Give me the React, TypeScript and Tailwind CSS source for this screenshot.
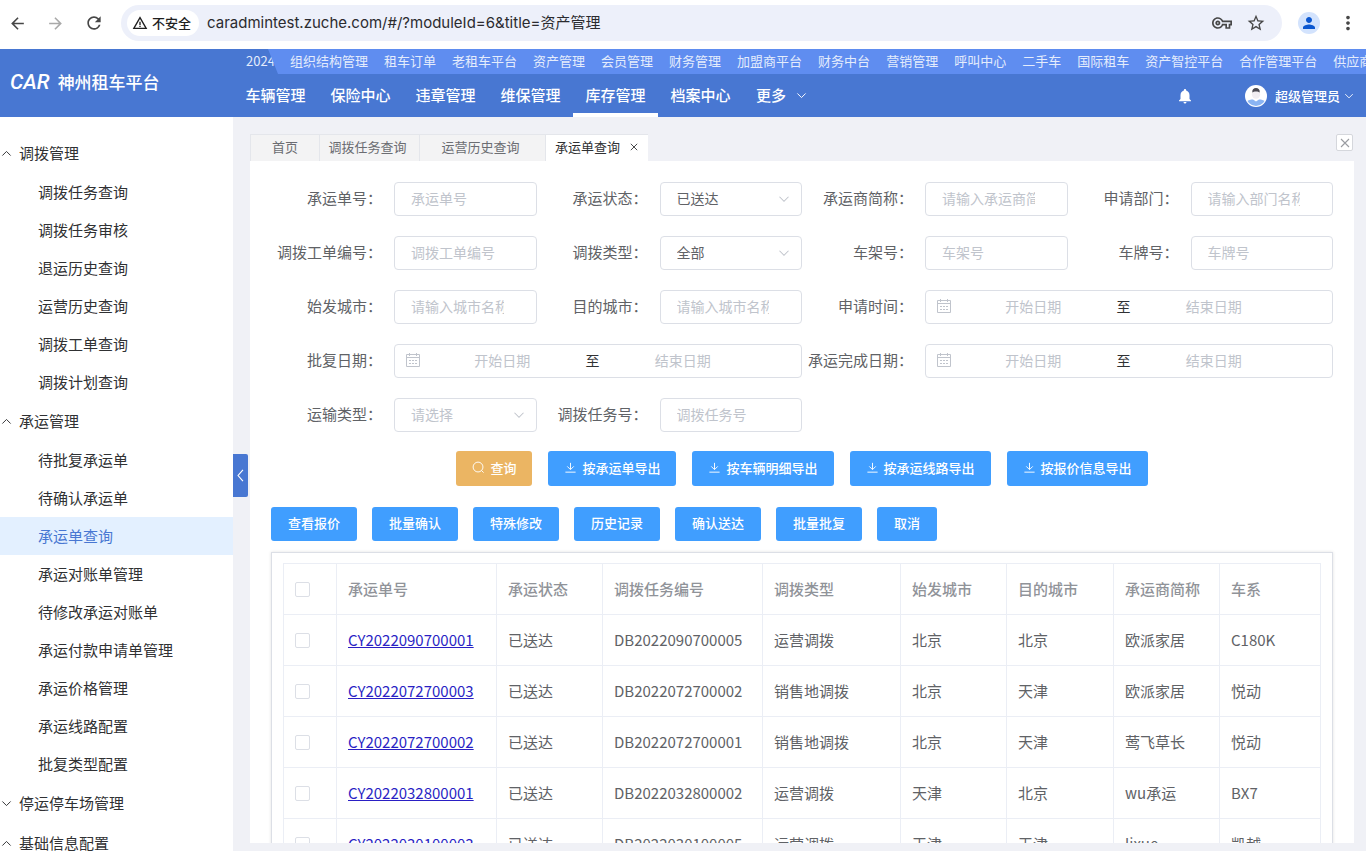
import type { ReactNode } from 'react';
import {
  MdArrowBack,
  MdArrowForward,
  MdMoreVert,
  MdNotifications,
  MdOutlineVpnKey,
  MdPerson,
  MdRefresh,
  MdStarOutline,
  MdWarningAmber,
} from 'react-icons/md';

const SYSTEMS = [
  '组织结构管理', '租车订单', '老租车平台', '资产管理', '会员管理', '财务管理', '加盟商平台', '财务中台',
  '营销管理', '呼叫中心', '二手车', '国际租车', '资产智控平台', '合作管理平台', '供应商平台',
];

const MODULES = ['车辆管理', '保险中心', '违章管理', '维保管理', '库存管理', '档案中心'];

const MENU = [
  {
    title: '调拨管理',
    open: true,
    items: ['调拨任务查询', '调拨任务审核', '退运历史查询', '运营历史查询', '调拨工单查询', '调拨计划查询'],
  },
  {
    title: '承运管理',
    open: true,
    items: [
      '待批复承运单', '待确认承运单', '承运单查询', '承运对账单管理', '待修改承运对账单',
      '承运付款申请单管理', '承运价格管理', '承运线路配置', '批复类型配置',
    ],
  },
  { title: '停运停车场管理', open: false, items: [] },
  { title: '基础信息配置', open: true, items: [] },
];

const EXPORTS = ['按承运单导出', '按车辆明细导出', '按承运线路导出', '按报价信息导出'];
const ACTIONS = ['查看报价', '批量确认', '特殊修改', '历史记录', '确认送达', '批量批复', '取消'];

const COLUMNS = [
  { label: '承运单号', width: 'w-[160px]' },
  { label: '承运状态', width: 'w-[106px]' },
  { label: '调拨任务编号', width: 'w-[160px]' },
  { label: '调拨类型', width: 'w-[138px]' },
  { label: '始发城市', width: 'w-[106px]' },
  { label: '目的城市', width: 'w-[107px]' },
  { label: '承运商简称', width: 'w-[106px]' },
  { label: '车系', width: '' },
];

const ROWS = [
  ['CY2022090700001', '已送达', 'DB2022090700005', '运营调拨', '北京', '北京', '欧派家居', 'C180K'],
  ['CY2022072700003', '已送达', 'DB2022072700002', '销售地调拨', '北京', '天津', '欧派家居', '悦动'],
  ['CY2022072700002', '已送达', 'DB2022072700001', '销售地调拨', '北京', '天津', '莺飞草长', '悦动'],
  ['CY2022032800001', '已送达', 'DB2022032800002', '运营调拨', '天津', '北京', 'wu承运', 'BX7'],
  ['CY2022030100003', '已送达', 'DB2022030100005', '运营调拨', '天津', '天津', 'lixue', '凯越'],
];

const chevrons = {
  down: 'M2 5l6 6 6-6',
  up: 'M2 11l6-6 6 6',
  left: 'M11 1l-6 7 6 7',
};

function Chevron({ dir, className }: { dir: keyof typeof chevrons; className: string }) {
  return (
    <svg viewBox="0 0 16 16" fill="none" stroke="currentColor" strokeWidth="1.4" className={className} aria-hidden="true">
      <path d={chevrons[dir]} />
    </svg>
  );
}

function Cross({ className }: { className: string }) {
  return (
    <svg viewBox="0 0 10 10" fill="none" stroke="currentColor" strokeWidth="1.1" className={className} aria-hidden="true">
      <path d="M1 1l8 8M9 1l-8 8" />
    </svg>
  );
}

function CalendarIcon() {
  return (
    <svg viewBox="0 0 16 16" fill="none" stroke="currentColor" className="size-4 text-[#c0c4cc]" aria-hidden="true">
      <path d="M1.5 2.5h13v12h-13zM1.5 5.5h13M4.5 1v3M11.5 1v3M4 8.5h2M7 8.5h2M10 8.5h2M4 11.5h2M7 11.5h2M10 11.5h2" />
    </svg>
  );
}

function SearchIcon() {
  return (
    <svg viewBox="0 0 14 14" fill="none" stroke="currentColor" className="size-[13px]" aria-hidden="true">
      <circle cx="6.5" cy="6.5" r="5.3" />
      <path d="M10.3 10.3l2.2 2.2" />
    </svg>
  );
}

function DownloadIcon() {
  return (
    <svg viewBox="0 0 14 14" fill="none" stroke="currentColor" className="size-[13px]" aria-hidden="true">
      <path d="M7 2v7M3.5 5.800L7 9.300l3.500-3.500M1.500 12h11" />
    </svg>
  );
}

function UserAvatar() {
  return (
    <svg viewBox="0 0 22 22" className="size-[22px]" aria-hidden="true">
      <clipPath id="avatar-clip">
        <circle cx="11" cy="11" r="10" />
      </clipPath>
      <circle cx="11" cy="11" r="11" fill="#fff" />
      <g clipPath="url(#avatar-clip)">
        <path d="M1 22v-5c2-2 5-2.500 7-2.500l3 2 3-2c2 0 5 .5 7 2.500v5z" fill="#8ab4f3" />
        <circle cx="11" cy="9.500" r="4.200" fill="#f1eef2" />
        <path d="M7.300 7.500C7 4.500 8.500 3 11 3s4 1.500 3.700 4.500C13.500 6 8.500 6 7.300 7.500z" fill="#4b4a52" />
      </g>
    </svg>
  );
}

function Field({ label, id, wide, children }: { label: string; id: string; wide?: boolean; children: ReactNode }) {
  return (
    <div className={wide ? 'col-span-2 flex items-center' : 'flex items-center'}>
      <label htmlFor={id} className="w-[123px] shrink-0 pr-3 pb-[2px] text-right whitespace-nowrap">
        {label}：
      </label>
      <div className="min-w-0 flex-1">{children}</div>
    </div>
  );
}

function TextField({ label, id, placeholder }: { label: string; id: string; placeholder?: string }) {
  return (
    <Field label={label} id={id}>
      <input
        id={id}
        type="text"
        placeholder={placeholder ?? label}
        className="block h-[34px] w-full rounded border border-[#dcdfe6] bg-white pr-8 pb-[2px] pl-4 text-sm placeholder:text-[#c0c4cc]"
      />
    </Field>
  );
}

function SelectField({ label, id, value, empty }: { label: string; id: string; value: string; empty?: boolean }) {
  return (
    <Field label={label} id={id}>
      <div className="relative">
        <select
          id={id}
          className={
            empty
              ? 'block h-[34px] w-full appearance-none rounded border border-[#dcdfe6] bg-white pr-8 pb-[2px] pl-4 text-sm text-[#c0c4cc]'
              : 'block h-[34px] w-full appearance-none rounded border border-[#dcdfe6] bg-white pr-8 pb-[2px] pl-4 text-sm'
          }
        >
          <option>{value}</option>
        </select>
        <Chevron dir="down" className="pointer-events-none absolute top-[11px] right-3 size-3 text-[#c0c4cc]" />
      </div>
    </Field>
  );
}

function DateRange({ label, id }: { label: string; id: string }) {
  return (
    <Field label={label} id={id} wide>
      <div className="flex h-[34px] items-center rounded border border-[#dcdfe6] bg-white px-[10px] pb-[2px] text-sm">
        <span className="w-[22px] shrink-0">
          <CalendarIcon />
        </span>
        <input id={id} type="text" placeholder="开始日期" className="w-[39%] text-center placeholder:text-[#c0c4cc]" />
        <span className="w-[30px] shrink-0 text-center text-[#303133]">至</span>
        <input
          type="text"
          aria-label={`${label}结束`}
          placeholder="结束日期"
          className="w-[39%] text-center placeholder:text-[#c0c4cc]"
        />
      </div>
    </Field>
  );
}

function Checkbox({ label }: { label: string }) {
  return (
    <input
      type="checkbox"
      aria-label={label}
      className="block size-[15px] appearance-none rounded-xs border border-[#dcdfe6] bg-white"
    />
  );
}

function BrowserBar() {
  return (
    <div className="flex h-[49px] shrink-0 items-center bg-white pr-[7px] pb-[3px] pl-2 text-[#474747]">
      <button aria-label="后退"><MdArrowBack className="size-[19px]" /></button>
      <button aria-label="前进" className="ml-[19px] text-[#a9a9a9]"><MdArrowForward className="size-[19px]" /></button>
      <button aria-label="刷新" className="ml-[19px]"><MdRefresh className="size-5" /></button>
      <div className="ml-[17px] flex h-9 flex-1 items-center rounded-full bg-[#edf0fa] pr-4 pl-[6px]">
        <button className="flex h-[26px] items-center gap-1 rounded-full bg-white px-[5px] pr-2 text-[13px] font-medium text-[#1f1f1f]">
          <MdWarningAmber className="size-4" />
          不安全
        </button>
        <span className="ml-2 flex-1 font-['Inter','Noto_Sans_CJK_SC',sans-serif] text-[15px] text-[#2b2b2f]">
          caradmintest.zuche.com/#/?moduleId=6&amp;title=资产管理
        </span>
        <button aria-label="密码"><MdOutlineVpnKey className="size-5" /></button>
        <button aria-label="收藏" className="ml-[14px]"><MdStarOutline className="size-5" /></button>
      </div>
      <button aria-label="用户" className="ml-4 flex size-[22px] items-center justify-center rounded-full bg-[#d3e3fd] text-[#0b57d0]">
        <MdPerson className="size-[18px]" />
      </button>
      <button aria-label="更多选项" className="ml-[17px]"><MdMoreVert className="size-[22px]" /></button>
    </div>
  );
}

function Header() {
  return (
    <header className="flex h-[68px] shrink-0 bg-[#4877d2] text-white">
      <div className="flex w-[233px] shrink-0 items-center gap-2 pb-[2px] pl-[10px]">
        <span className="font-['Roboto',sans-serif] text-[21px] leading-none font-medium italic">CAR</span>
        <span className="text-[17px] font-medium">神州租车平台</span>
      </div>
      <div className="flex min-w-0 flex-1 flex-col">
        <div className="flex h-[25px] shrink-0 overflow-hidden text-[13px] leading-[23px] whitespace-nowrap text-[#e4ecfc]">
          <span className="w-[35px] shrink-0 pl-[13px]">2024</span>
          <nav className="relative flex flex-1 gap-4 bg-[#5f8df0] pl-[22px] [clip-path:polygon(0_0,100%_0,100%_100%,10px_100%)]">
            {SYSTEMS.map((s) => (
              <a key={s} href="#">{s}</a>
            ))}
          </nav>
        </div>
        <div className="flex flex-1">
          <nav className="flex text-[15px] font-medium">
            {MODULES.map((m) => (
              <a
                key={m}
                href="#"
                className={
                  m === '库存管理'
                    ? 'flex w-[85px] items-center justify-center border-b-4 border-white pt-1'
                    : 'flex w-[85px] items-center justify-center'
                }
              >
                {m}
              </a>
            ))}
            <a href="#" className="flex items-center gap-[10px] pl-[13px]">
              更多
              <Chevron dir="down" className="size-[11px]" />
            </a>
          </nav>
          <div className="ml-auto flex items-center pr-3">
            <button aria-label="消息"><MdNotifications className="size-[18px]" /></button>
            <button className="ml-[51px] flex items-center text-[13px] font-medium">
              <UserAvatar />
              <span className="ml-2">超级管理员</span>
              <Chevron dir="down" className="ml-1 size-[10px]" />
            </button>
          </div>
        </div>
      </div>
    </header>
  );
}

function Sidebar() {
  return (
    <aside className="w-[233px] shrink-0 overflow-hidden bg-white pt-4 text-[15px] text-[#303133]">
      {MENU.map((group) => (
        <div key={group.title}>
          <button className="flex h-10 w-full items-center gap-[7px] pl-[1px]">
            <Chevron dir={group.open ? 'up' : 'down'} className="size-[11px]" />
            {group.title}
          </button>
          {group.items.map((item) => (
            <a
              key={item}
              href="#"
              className={
                item === '承运单查询'
                  ? 'flex h-[38px] items-center bg-[#e3f0ff] pl-[38px] text-[#4877d2]'
                  : 'flex h-[38px] items-center pl-[38px]'
              }
            >
              {item}
            </a>
          ))}
        </div>
      ))}
    </aside>
  );
}

function Tabs() {
  return (
    <div className="flex h-[27px] shrink-0 items-start justify-between pr-px">
      <div className="flex h-full border-t border-l border-[#e4e6eb] bg-[#f3f3f4] text-[13px] text-[#6b6d72]">
        <button className="w-[69px] border-r border-[#e4e6eb] pb-[2px]">首页</button>
        <button className="w-[100px] border-r border-[#e4e6eb] pr-1 pb-[2px]">调拨任务查询</button>
        <button className="w-[126px] border-r border-[#e4e6eb] pr-1 pb-[2px]">运营历史查询</button>
        <div className="flex w-[102px] items-center gap-[10px] bg-white pb-[2px] pl-[9px] text-[#303133]">
          承运单查询
          <button aria-label="关闭"><Cross className="size-2" /></button>
        </div>
      </div>
      <button aria-label="关闭全部" className="flex size-[17px] items-center justify-center rounded-xs border border-[#d5d7dc] bg-white text-[#9a9ca1]">
        <Cross className="size-[10px]" />
      </button>
    </div>
  );
}

function SearchForm() {
  return (
    <form>
      <div className="grid grid-cols-4 gap-y-5">
        <TextField label="承运单号" id="order-no" />
        <SelectField label="承运状态" id="status" value="已送达" />
        <TextField label="承运商简称" id="carrier" placeholder="请输入承运商简称" />
        <TextField label="申请部门" id="dept" placeholder="请输入部门名称" />
        <TextField label="调拨工单编号" id="work-no" />
        <SelectField label="调拨类型" id="type" value="全部" />
        <TextField label="车架号" id="vin" />
        <TextField label="车牌号" id="plate" />
        <TextField label="始发城市" id="from-city" placeholder="请输入城市名称" />
        <TextField label="目的城市" id="to-city" placeholder="请输入城市名称" />
        <DateRange label="申请时间" id="apply-date" />
        <DateRange label="批复日期" id="reply-date" />
        <DateRange label="承运完成日期" id="finish-date" />
        <SelectField label="运输类型" id="transport" value="请选择" empty />
        <TextField label="调拨任务号" id="task-no" />
      </div>
      <div className="mt-[19px] flex justify-center gap-4 text-[13px] font-medium text-white">
        <button type="button" className="flex h-[35px] items-center gap-[5px] rounded-[3px] bg-[#ebb563] px-4 pb-[2px]">
          <SearchIcon />
          查询
        </button>
        {EXPORTS.map((name) => (
          <button key={name} type="button" className="flex h-[35px] items-center gap-[5px] rounded-[3px] bg-[#409eff] px-4 pb-[2px]">
            <DownloadIcon />
            {name}
          </button>
        ))}
      </div>
    </form>
  );
}

function OrderTable() {
  return (
    <div className="mt-[11px] border border-[#dcdfe6] p-[11px] pt-[10px] shadow-[0_0_3px_rgba(0,0,0,0.12)]">
      <table className="w-full table-fixed border-collapse text-left">
        <thead className="text-[#909399]">
          <tr className="h-[51px]">
            <th className="w-[53px] border border-[#ebeef5] pl-[11px]"><Checkbox label="全选" /></th>
            {COLUMNS.map((c) => (
              <th key={c.label} className={`${c.width} border border-[#ebeef5] pl-[11px] font-medium`}>{c.label}</th>
            ))}
          </tr>
        </thead>
        <tbody>
          {ROWS.map((row) => (
            <tr key={row[0]} className="h-[51px]">
              <td className="border border-[#ebeef5] pl-[11px]"><Checkbox label={row[0]} /></td>
              {row.map((cell, i) => (
                <td key={i} className="border border-[#ebeef5] pl-[11px] whitespace-nowrap">
                  {i === 0 ? <a href="#" className="text-[#2a1fc4] underline">{cell}</a> : cell}
                </td>
              ))}
            </tr>
          ))}
        </tbody>
      </table>
    </div>
  );
}

export default function App() {
  return (
    <div className="flex h-screen flex-col overflow-hidden bg-[#f0f1f6] font-['Noto_Sans_CJK_SC',sans-serif]">
      <BrowserBar />
      <Header />
      <div className="flex min-h-0 flex-1">
        <Sidebar />
        <main className="relative flex min-w-0 flex-1 flex-col pt-[17px] pr-3 pb-2 pl-[17px]">
          <button
            aria-label="收起菜单"
            className="absolute top-[337px] left-0 flex h-[43px] w-[15px] items-center justify-center rounded-r-xs bg-[#4877d2] text-white"
          >
            <Chevron dir="left" className="size-[13px]" />
          </button>
          <Tabs />
          <section className="min-h-0 flex-1 overflow-hidden bg-white px-[21px] pt-[21px] text-[15px] text-[#606266]">
            <SearchForm />
            <div className="mt-[21px] flex gap-[15px] text-[13px] font-medium text-white">
              {ACTIONS.map((a) => (
                <button key={a} className="h-[34px] rounded-[3px] bg-[#409eff] px-[17px] pb-[2px]">{a}</button>
              ))}
            </div>
            <OrderTable />
          </section>
        </main>
      </div>
    </div>
  );
}
